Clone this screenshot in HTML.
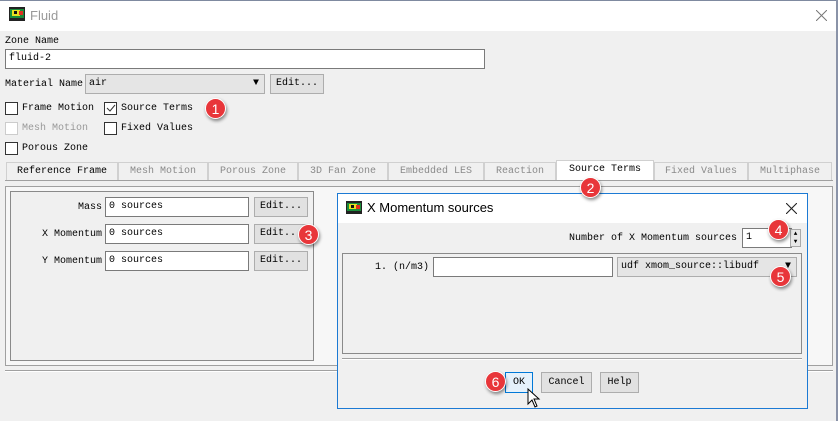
<!DOCTYPE html>
<html><head><style>
*{box-sizing:border-box;margin:0;padding:0}
body{width:838px;height:421px;background:#f0f0f0;position:relative;overflow:hidden;font-family:"Liberation Mono",monospace;font-size:10px;color:#000}
.a{position:absolute}
.inp{position:absolute;background:#fff;border:1px solid #7a7a7a;padding:0 3px;line-height:18px;white-space:nowrap}
.btn{position:absolute;background:#e1e1e1;border:1px solid #adadad;text-align:center;line-height:18px}
.cb{position:absolute;width:13px;height:13px;border:1px solid #333;background:#fff}
.lbl{position:absolute;white-space:nowrap}
.tab{position:absolute;top:162px;height:18px;border:1px solid #d0d0d0;border-bottom:none;color:#8a8a8a;text-align:center;line-height:18px;background:#f0f0f0}
.badge{position:absolute;width:21px;height:21px;border-radius:50%;background:#e8363a;color:#fff;font-family:"Liberation Sans",sans-serif;font-size:14px;text-align:center;line-height:21px;box-shadow:1px 2px 3px rgba(0,0,0,.45);border:1px solid #fff}
</style></head><body>
<div class="a" style="left:0;top:0;width:838px;height:31px;background:#fff;border-top:1px solid #7f8aa0;border-right:2px solid #7f8aa0"></div>
<div class="a" style="left:836px;top:0;width:2px;height:421px;background:#8a93a8"></div>
<svg class="a" style="left:9px;top:7px" width="16" height="14"><rect width="16" height="14" fill="#222"/><rect x="1" y="2" width="14" height="9" fill="#1a8c3a"/><rect x="3" y="3" width="8" height="6" fill="#e8e020"/><rect x="5" y="4" width="3" height="3" fill="#111"/><rect x="10" y="4" width="4" height="4" fill="#e03020"/></svg>
<div class="lbl" style="left:30px;top:8px;font-family:'Liberation Sans',sans-serif;font-size:13px;color:#999">Fluid</div>
<svg class="a" style="left:816px;top:10px" width="11" height="11"><path d="M0 0L11 11M11 0L0 11" stroke="#777" stroke-width="1"/></svg>

<div class="lbl" style="left:5px;top:36px">Zone Name</div>
<div class="inp" style="left:5px;top:49px;width:480px;height:20px">fluid-2</div>
<div class="lbl" style="left:5px;top:79px">Material Name</div>
<div class="inp" style="left:85px;top:74px;width:180px;height:20px;background:#e5e5e5;border-color:#adadad">air<span style="position:absolute;right:5px;top:0">&#9660;</span></div>
<div class="btn" style="left:270px;top:74px;width:54px;height:20px">Edit...</div>

<div class="cb" style="left:5px;top:102px"></div><div class="lbl" style="left:22px;top:103px">Frame Motion</div>
<div class="cb" style="left:104px;top:102px"></div><svg class="a" style="left:106px;top:104px" width="10" height="9"><path d="M1 4L4 7L9 1" stroke="#333" fill="none"/></svg><div class="lbl" style="left:121px;top:103px">Source Terms</div>
<div class="cb" style="left:5px;top:122px;border-color:#ccc"></div><div class="lbl" style="left:22px;top:123px;color:#999">Mesh Motion</div>
<div class="cb" style="left:104px;top:122px"></div><div class="lbl" style="left:121px;top:123px">Fixed Values</div>
<div class="cb" style="left:5px;top:142px"></div><div class="lbl" style="left:22px;top:143px">Porous Zone</div>
<div class="badge" style="left:205px;top:98px">1</div>

<div class="tab" style="left:6px;width:112px;color:#000">Reference Frame</div>
<div class="tab" style="left:118px;width:90px">Mesh Motion</div>
<div class="tab" style="left:208px;width:90px">Porous Zone</div>
<div class="tab" style="left:298px;width:90px">3D Fan Zone</div>
<div class="tab" style="left:388px;width:96px">Embedded LES</div>
<div class="tab" style="left:484px;width:72px">Reaction</div>
<div class="tab" style="left:556px;width:98px;top:160px;height:21px;background:#fff;color:#000">Source Terms</div>
<div class="tab" style="left:654px;width:94px">Fixed Values</div>
<div class="tab" style="left:748px;width:84px">Multiphase</div>
<div class="a" style="left:5px;top:180px;width:828px;height:1px;background:#a0a0a0"></div>
<div class="a" style="left:5px;top:186px;width:828px;height:180px;border:1px solid #a0a0a0;background:#f7f7f7"></div>
<div class="a" style="left:10px;top:191px;width:304px;height:170px;border:1px solid #8a8a8a;background:#f0f0f0"></div>
<div class="a" style="left:5px;top:370px;width:828px;height:2px;border-top:1px solid #a0a0a0;border-bottom:1px solid #fff"></div>

<div class="lbl" style="right:736px;top:202px">Mass</div>
<div class="inp" style="left:105px;top:197px;width:144px;height:20px">0 sources</div>
<div class="btn" style="left:254px;top:197px;width:54px;height:20px">Edit...</div>
<div class="lbl" style="right:736px;top:229px">X Momentum</div>
<div class="inp" style="left:105px;top:224px;width:144px;height:20px">0 sources</div>
<div class="btn" style="left:254px;top:224px;width:54px;height:20px">Edit...</div>
<div class="lbl" style="right:736px;top:256px">Y Momentum</div>
<div class="inp" style="left:105px;top:251px;width:144px;height:20px">0 sources</div>
<div class="btn" style="left:254px;top:251px;width:54px;height:20px">Edit...</div>
<div class="badge" style="left:298px;top:224px">3</div>

<!-- dialog -->
<div class="a" style="left:337px;top:193px;width:471px;height:216px;border:1px solid #1c7ad4;background:#f0f0f0"></div>
<div class="a" style="left:338px;top:194px;width:469px;height:29px;background:#fff"></div>
<svg class="a" style="left:346px;top:201px" width="16" height="13"><rect width="16" height="13" fill="#222"/><rect x="1" y="2" width="14" height="8" fill="#1a8c3a"/><rect x="3" y="3" width="8" height="5" fill="#e8e020"/><rect x="5" y="4" width="3" height="3" fill="#111"/><rect x="10" y="4" width="4" height="4" fill="#e03020"/></svg>
<div class="lbl" style="left:367px;top:200px;font-family:'Liberation Sans',sans-serif;font-size:13px">X Momentum sources</div>
<svg class="a" style="left:786px;top:203px" width="11" height="11"><path d="M0 0L11 11M11 0L0 11" stroke="#222" stroke-width="1.1"/></svg>
<div class="lbl" style="right:101px;top:233px">Number of X Momentum sources</div>
<div class="inp" style="left:742px;top:228px;width:50px;height:20px">1</div>
<div class="a" style="left:790px;top:229px;width:11px;height:18px;border:1px solid #aaa;background:#e8e8e8;font-size:6px;line-height:8px;text-align:center">▲<br>▼</div>
<div class="a" style="left:342px;top:253px;width:460px;height:101px;border:1px solid #8a8a8a"></div>
<div class="lbl" style="left:375px;top:262px">1. (n/m3)</div>
<div class="inp" style="left:433px;top:257px;width:180px;height:20px"></div>
<div class="inp" style="left:617px;top:257px;width:180px;height:20px;background:#e5e5e5;border-color:#adadad">udf xmom_source::libudf<span style="position:absolute;right:5px;top:0">&#9660;</span></div>
<div class="a" style="left:342px;top:358px;width:460px;height:2px;border-top:1px solid #a0a0a0;border-bottom:1px solid #fff"></div>
<div class="btn" style="left:505px;top:372px;width:28px;height:21px;border-color:#0078d7;background:#e5f1fb;line-height:19px">OK</div>
<div class="btn" style="left:541px;top:372px;width:51px;height:21px;line-height:19px">Cancel</div>
<div class="btn" style="left:600px;top:372px;width:39px;height:21px;line-height:19px">Help</div>
<svg class="a" style="left:527px;top:388px" width="14" height="22"><path d="M1 1L1 16L5 12L8 19L10 18L7 11L12 11Z" fill="#fff" stroke="#000" stroke-width="1"/></svg>
<div class="badge" style="left:768px;top:219px">4</div>
<div class="badge" style="left:770px;top:266px">5</div>
<div class="badge" style="left:485px;top:371px">6</div>
<div class="badge" style="left:580px;top:177px">2</div>
</body></html>
